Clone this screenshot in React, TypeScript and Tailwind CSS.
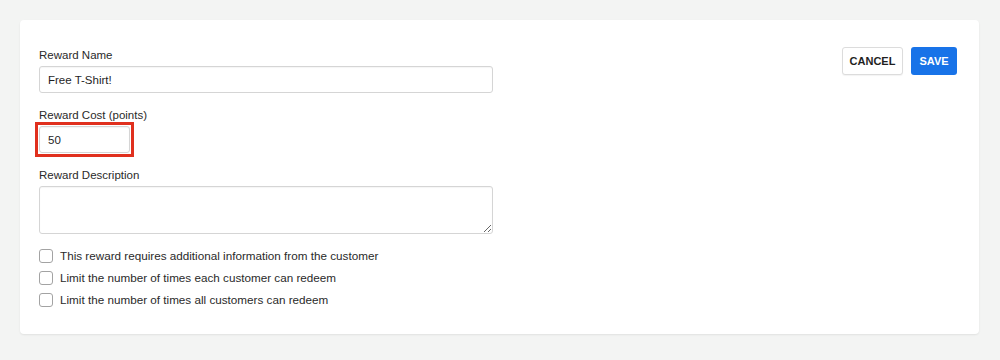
const labelClassName = 'block text-[11.5px] leading-[16px] text-[#2a2a2a] mb-[3px]';
const inputClassName =
  'block h-[27px] rounded-[3px] border border-[#d5d5d5] bg-white px-[8px] text-[11.5px] text-[#1f1f1f] shadow-[inset_0_1px_1px_rgba(0,0,0,0.04)] outline-none';

const options = [
  'This reward requires additional information from the customer',
  'Limit the number of times each customer can redeem',
  'Limit the number of times all customers can redeem',
];

export default function App() {
  return (
    <div className="h-[360px] w-[1000px] bg-[#f3f4f3] px-[20px] pt-[20px]" style={{ fontFamily: '"Liberation Sans", Arial, sans-serif' }}>
      <div className="flex h-[314px] w-[959px] justify-between rounded-[4px] bg-white pb-[23px] pl-[19px] pr-[22px] pt-[27px] shadow-[0_1px_2px_rgba(0,0,0,0.08)]">
        <div className="w-[454px]">
          <label className={labelClassName}>Reward Name</label>
          <input className={`${inputClassName} w-full`} defaultValue="Free T-Shirt!" />

          <label className={`${labelClassName} mt-[14px]`}>Reward Cost (points)</label>
          {/* Highlight - annotation box drawn round the cost field */}
          <div className="-m-[4px] w-fit border-[3px] border-[#e0301e] p-px">
            <input className={`${inputClassName} w-[91px]`} defaultValue="50" />
          </div>

          <label className={`${labelClassName} mt-[14px]`}>Reward Description</label>
          <textarea className={`${inputClassName} h-[48px] w-full resize-y py-[6px]`} />

          <div className="mt-[11px] flex flex-col">
            {options.map(text => (
              <label key={text} className="flex h-[22px] items-center gap-[7px] text-[11.7px] text-[#2a2a2a]">
                <span className="block size-[14px] rounded-[3px] border border-[#a3a3a3] bg-white" />
                {text}
              </label>
            ))}
          </div>
        </div>

        <div className="flex h-[28px] gap-[8px]">
          <button
            type="button"
            className="h-[28px] w-[61px] rounded-[3px] border border-[#dcdcdc] bg-white text-[11px] font-semibold text-[#1f1f1f] shadow-[0_1px_1px_rgba(0,0,0,0.05)]"
          >
            CANCEL
          </button>
          <button
            type="button"
            className="h-[28px] w-[46px] rounded-[3px] bg-[#1873e8] text-[11px] font-semibold text-white"
          >
            SAVE
          </button>
        </div>
      </div>
    </div>
  );
}
